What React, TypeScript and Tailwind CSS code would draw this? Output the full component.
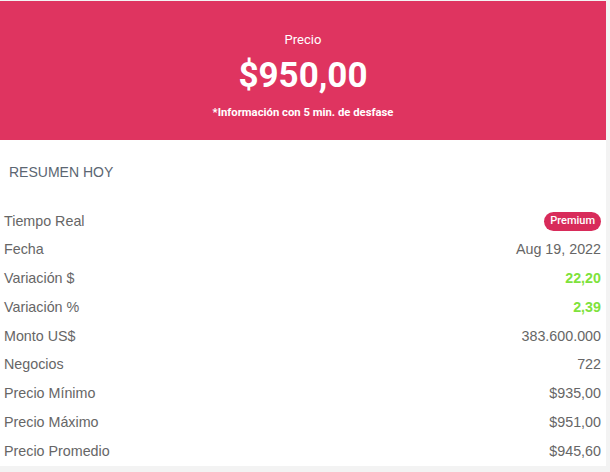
import React from "react";

const rows: { label: string; value: React.ReactNode; kind?: "green" | "badge" }[] = [
  { label: "Tiempo Real", value: "Premium", kind: "badge" },
  { label: "Fecha", value: "Aug 19, 2022" },
  { label: "Variación $", value: "22,20", kind: "green" },
  { label: "Variación %", value: "2,39", kind: "green" },
  { label: "Monto US$", value: "383.600.000" },
  { label: "Negocios", value: "722" },
  { label: "Precio Mínimo", value: "$935,00" },
  { label: "Precio Máximo", value: "$951,00" },
  { label: "Precio Promedio", value: "$945,60" },
];

export default function App() {
  return (
    <div className="w-[610px] h-[472px] bg-[#f3f3f3] pt-px overflow-hidden">
      <div className="w-[606px] h-[465px] bg-white">
        <div
          className="h-[139px] bg-[#df3460] flex flex-col items-center text-white"
          style={{ fontFamily: "Roboto, 'Liberation Sans', sans-serif" }}
        >
          <div className="mt-[30px] text-[13px] leading-[18px]">Precio</div>
          <div className="mt-[7px] text-[35px] font-bold leading-[40px]">$950,00</div>
          <div className="mt-[10px] text-[11.3px] font-bold leading-[14px]">
            *Información con 5 min. de desfase
          </div>
        </div>
        <div style={{ fontFamily: "'Liberation Sans', Arial, sans-serif" }}>
          <div className="pl-[9px] pt-[23px] h-[67px] text-[14px] leading-[18px] text-[#5b6672]">
            RESUMEN HOY
          </div>
          <div className="pr-[5px] pl-[4px]">
            {rows.map((r) => (
              <div key={r.label} className="h-[28.75px] flex items-center justify-between text-[14.3px] text-[#666666]">
                <span>{r.label}</span>
                {r.kind === "badge" ? (
                  <span
                    className="h-[19px] px-[6px] rounded-full bg-[#d82b5a] text-white text-[11px] font-medium flex items-center"
                    style={{ fontFamily: "Roboto, 'Liberation Sans', sans-serif" }}
                  >
                    {r.value}
                  </span>
                ) : r.kind === "green" ? (
                  <span className="font-bold text-[#7ee23c]">{r.value}</span>
                ) : (
                  <span>{r.value}</span>
                )}
              </div>
            ))}
          </div>
        </div>
      </div>
    </div>
  );
}
